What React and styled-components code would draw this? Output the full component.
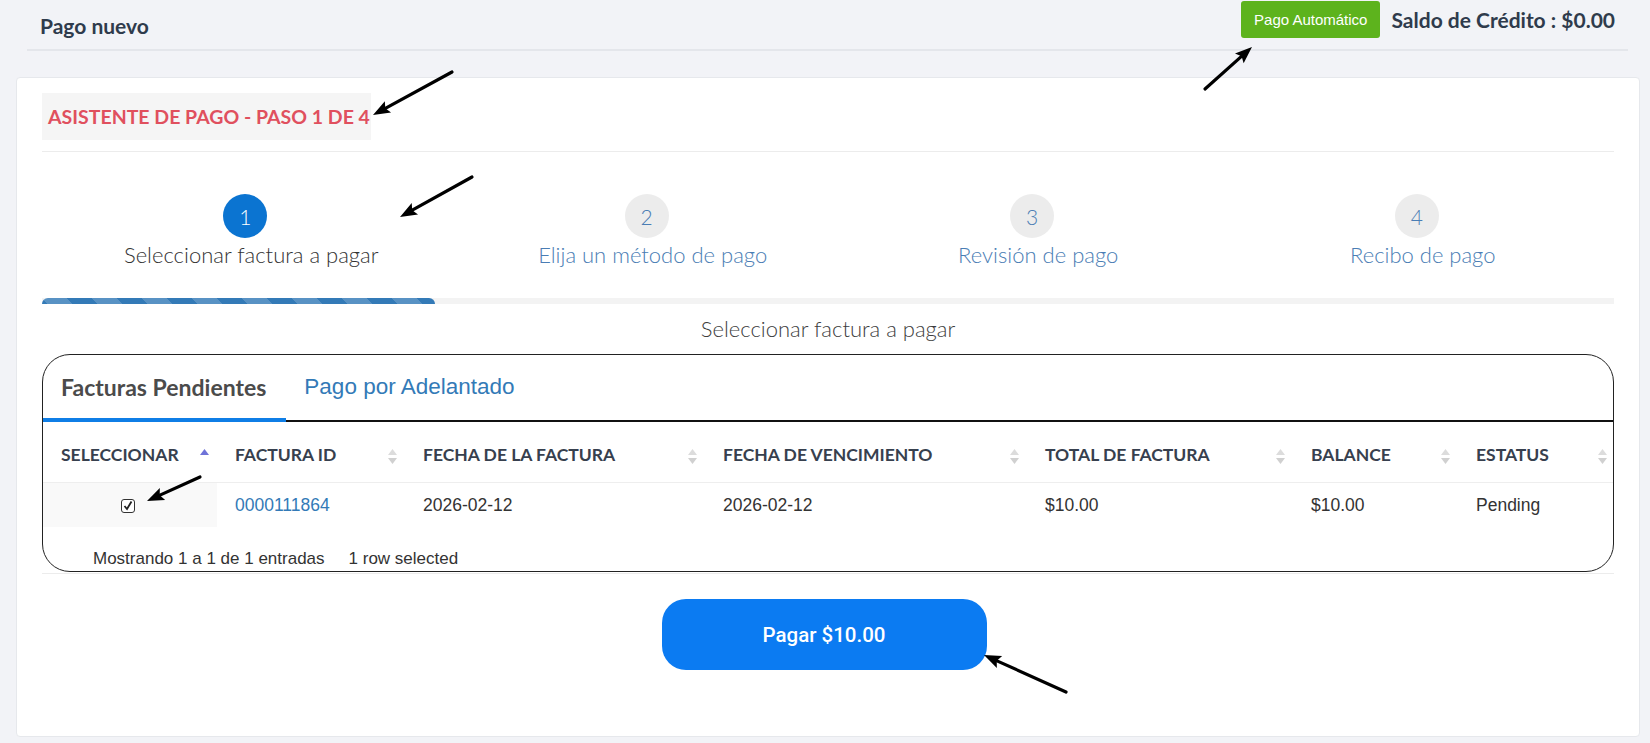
import React from 'react';
import styled, { createGlobalStyle, css } from 'styled-components';

const GlobalStyle = createGlobalStyle`
  html, body {
    margin: 0;
    padding: 0;
    background: #f2f3f7;
    font-family: Lato, "Noto Sans", sans-serif;
    color: #333;
  }
  * { box-sizing: border-box; }
`;

const Page = styled.div`
  position: relative;
  width: 1650px;
  height: 743px;
  overflow: hidden;
`;

/* ---------- header ---------- */

const Header = styled.div`
  display: flex;
  justify-content: space-between;
  align-items: flex-start;
  height: 51px;
  margin: 0 22px 0 27px;
  padding: 0 13px;
  border-bottom: 2px solid #e4e6eb;
`;

const PageTitle = styled.h1`
  margin: 0;
  padding-top: 14px;
  font-size: 21px;
  line-height: 24px;
  font-weight: 700;
  color: #2f3b4c;
`;

const HeaderRight = styled.div`
  display: flex;
  align-items: center;
  gap: 11px;
  margin-top: 1px;
`;

const AutoPayButton = styled.button`
  height: 37px;
  padding: 0 13px;
  border: none;
  border-radius: 3px;
  background: #5db31d;
  color: #fff;
  font-family: "Liberation Sans", Arial, sans-serif;
  font-size: 15px;
`;

const Credit = styled.span`
  font-size: 21px;
  font-weight: 700;
  color: #2f3b4c;
`;

/* ---------- card ---------- */

const Card = styled.div`
  margin: 26px 10px 0 16px;
  height: 660px;
  padding: 15px 25px 0 25px;
  background: #fff;
  border: 1px solid #e6e8ec;
  border-radius: 4px;
`;

const WizardTitle = styled.div`
  display: inline-block;
  height: 47px;
  line-height: 47px;
  padding: 0 1px 0 6px;
  background: #f5f5f5;
  color: #e0505e;
  font-size: 19.5px;
  font-weight: 700;
`;

const Divider = styled.div`
  height: 1px;
  background: #ececec;
  margin-top: ${(p) => p.$top || 0}px;
`;

const Steps = styled.div`
  display: grid;
  grid-template-columns: 408fr 398fr 376fr 396fr;
  margin-top: 42px;
`;

const Step = styled.div`
  display: flex;
  flex-direction: column;
  align-items: center;
`;

const StepCircle = styled.div`
  width: 44px;
  height: 44px;
  border-radius: 50%;
  display: flex;
  align-items: center;
  justify-content: center;
  font-size: 21px;
  font-weight: 300;
  background: #ececec;
  color: #4a7db4;
  ${(p) =>
    p.$active &&
    css`
      background: #0b74d1;
      color: #fff;
    `}
`;

const StepLabel = styled.div`
  margin: 4px 0 0 12px;
  font-size: 22px;
  line-height: 26px;
  font-weight: 300;
  color: ${(p) => (p.$active ? '#333' : '#4a7db4')};
`;

const ProgressTrack = styled.div`
  margin-top: 30px;
  height: 6px;
  background: #f3f3f3;
`;

const ProgressFill = styled.div`
  height: 100%;
  border-radius: 6px 6px 0 0;
  background-color: #337ab7;
  background-image: linear-gradient(
    45deg,
    rgba(255, 255, 255, 0.18) 25%,
    transparent 25%,
    transparent 50%,
    rgba(255, 255, 255, 0.18) 50%,
    rgba(255, 255, 255, 0.18) 75%,
    transparent 75%,
    transparent
  );
  background-size: 50px 50px;
`;

const SectionTitle = styled.div`
  margin-top: 12px;
  text-align: center;
  font-size: 22px;
  line-height: 26px;
  font-weight: 300;
  color: #3d3d3d;
`;

const TableBox = styled.div`
  margin-top: 12px;
  border: 1px solid #222;
  border-radius: 28px;
  overflow: hidden;
`;

const Tabs = styled.div`
  display: flex;
  border-bottom: 2px solid #111;
`;

const Tab = styled.div`
  padding: 18px 20px 17px 18px;
  margin-bottom: -2px;
  line-height: 28px;
  border-bottom: 4px solid transparent;
  ${(p) =>
    p.$active
      ? css`
          font-size: 23px;
          font-weight: 700;
          color: #4b4b4b;
          border-bottom-color: #0f7ee6;
        `
      : css`
          font-family: "Liberation Sans", Arial, sans-serif;
          font-size: 22.5px;
          color: #337ab7;
          margin-bottom: 0;
          padding-bottom: 15px;
        `}
`;

const Table = styled.table`
  width: 100%;
  border-collapse: collapse;
  table-layout: fixed;
`;

const Th = styled.th`
  position: relative;
  height: 60px;
  padding: 5px 18px 0;
  text-align: left;
  font-size: 17.5px;
  font-weight: 700;
  color: #37404e;
  white-space: nowrap;
`;

const SortIcon = styled.svg`
  position: absolute;
  right: 8px;
  top: 27px;
`;

const Td = styled.td`
  height: 45px;
  padding: 2px 18px 0;
  border-top: 1px solid #eeeeee;
  font-family: "Liberation Sans", Arial, sans-serif;
  font-size: 17.5px;
  color: #333;
  ${(p) =>
    p.$sorted &&
    css`
      background: #f9f9f9;
      text-align: center;
      padding-right: 22px;
    `}
`;

const InvoiceLink = styled.span`
  color: #337ab7;
`;

const CheckBox = styled.span`
  display: inline-flex;
  align-items: center;
  justify-content: center;
  width: 14px;
  height: 14px;
  margin-top: 4px;
  border: 1px solid #333;
  border-radius: 3px;
  background: #fff;
`;

const TableInfo = styled.div`
  display: flex;
  gap: 24px;
  padding: 22px 0 3px 50px;
  font-family: "Liberation Sans", Arial, sans-serif;
  font-size: 17px;
  line-height: 19px;
  color: #333;
`;

const PayRow = styled.div`
  display: flex;
  justify-content: center;
  margin-top: 25px;
  padding-right: 8px;
`;

const PayButton = styled.button`
  width: 325px;
  height: 71px;
  border: none;
  border-radius: 24px;
  background: #0b7bf2;
  color: #fff;
  font-family: Roboto, sans-serif;
  font-size: 20.5px;
  font-weight: 500;
`;

/* ---------- annotation arrows ---------- */

const Overlay = styled.svg`
  position: absolute;
  left: 0;
  top: 0;
  pointer-events: none;
`;

const arrows = [
  [452, 72, 373, 115],
  [1205, 89, 1252, 47],
  [472, 177, 400, 217],
  [200, 477, 147, 501],
  [1066, 692, 984, 655],
];

const Arrow = ({ x1, y1, x2, y2 }) => {
  const len = Math.hypot(x2 - x1, y2 - y1);
  const dx = (x2 - x1) / len;
  const dy = (y2 - y1) / len;
  const head = 17;
  const half = 6.5;
  const bx = x2 - dx * head;
  const by = y2 - dy * head;
  const pts = [
    [x2, y2],
    [bx - dy * half, by + dx * half],
    [bx + dx * 3, by + dy * 3],
    [bx + dy * half, by - dx * half],
  ]
    .map((p) => p.join(','))
    .join(' ');
  return (
    <g>
      <line x1={x1} y1={y1} x2={bx + dx * 4} y2={by + dy * 4} stroke="#000" strokeWidth="3.2" strokeLinecap="round" />
      <polygon points={pts} fill="#000" />
    </g>
  );
};

const SortArrows = ({ active }) => (
  <SortIcon width="9" height="15" viewBox="0 0 9 15">
    <path d="M4.5 0 L9 6 L0 6 Z" fill={active ? '#6f73d8' : '#dcdcdc'} />
    {!active && <path d="M0 9 L9 9 L4.5 15 Z" fill="#d0d0d0" />}
  </SortIcon>
);

const steps = [
  'Seleccionar factura a pagar',
  'Elija un método de pago',
  'Revisión de pago',
  'Recibo de pago',
];

const columns = [
  { title: 'SELECCIONAR', width: 174 },
  { title: 'FACTURA ID', width: 188 },
  { title: 'FECHA DE LA FACTURA', width: 300 },
  { title: 'FECHA DE VENCIMIENTO', width: 322 },
  { title: 'TOTAL DE FACTURA', width: 266 },
  { title: 'BALANCE', width: 165 },
  { title: 'ESTATUS', width: 157 },
];

const App = () => {
  return (
    <Page>
      <GlobalStyle />
      <Header>
        <PageTitle>Pago nuevo</PageTitle>
        <HeaderRight>
          <AutoPayButton>Pago Automático</AutoPayButton>
          <Credit>Saldo de Crédito : $0.00</Credit>
        </HeaderRight>
      </Header>

      <Card>
        <WizardTitle>ASISTENTE DE PAGO - PASO 1 DE 4</WizardTitle>
        <Divider $top={11} />

        <Steps>
          {steps.map((label, i) => (
            <Step key={label}>
              <StepCircle $active={i === 0}>{i + 1}</StepCircle>
              <StepLabel $active={i === 0}>{label}</StepLabel>
            </Step>
          ))}
        </Steps>

        <ProgressTrack>
          <ProgressFill style={{ width: '25%' }} />
        </ProgressTrack>

        <SectionTitle>Seleccionar factura a pagar</SectionTitle>

        <TableBox>
          <Tabs>
            <Tab $active>Facturas Pendientes</Tab>
            <Tab>Pago por Adelantado</Tab>
          </Tabs>
          <Table>
            <colgroup>
              {columns.map((c) => (
                <col key={c.title} style={{ width: c.width }} />
              ))}
            </colgroup>
            <thead>
              <tr>
                {columns.map((c, i) => (
                  <Th key={c.title}>
                    {c.title}
                    <SortArrows active={i === 0} />
                  </Th>
                ))}
              </tr>
            </thead>
            <tbody>
              <tr>
                <Td $sorted>
                  <CheckBox>
                    <svg width="10" height="10" viewBox="0 0 10 10">
                      <path d="M1.5 5 L4 8 L8.5 0.5" fill="none" stroke="#222" strokeWidth="1.8" />
                    </svg>
                  </CheckBox>
                </Td>
                <Td>
                  <InvoiceLink>0000111864</InvoiceLink>
                </Td>
                <Td>2026-02-12</Td>
                <Td>2026-02-12</Td>
                <Td>$10.00</Td>
                <Td>$10.00</Td>
                <Td>Pending</Td>
              </tr>
            </tbody>
          </Table>
          <TableInfo>
            <span>Mostrando 1 a 1 de 1 entradas</span>
            <span>1 row selected</span>
          </TableInfo>
        </TableBox>

        <Divider $top={1} />

        <PayRow>
          <PayButton>Pagar $10.00</PayButton>
        </PayRow>
      </Card>

      <Overlay width="1650" height="743" viewBox="0 0 1650 743">
        {arrows.map(([x1, y1, x2, y2], i) => (
          <Arrow key={i} x1={x1} y1={y1} x2={x2} y2={y2} />
        ))}
      </Overlay>
    </Page>
  );
};

export default App;
